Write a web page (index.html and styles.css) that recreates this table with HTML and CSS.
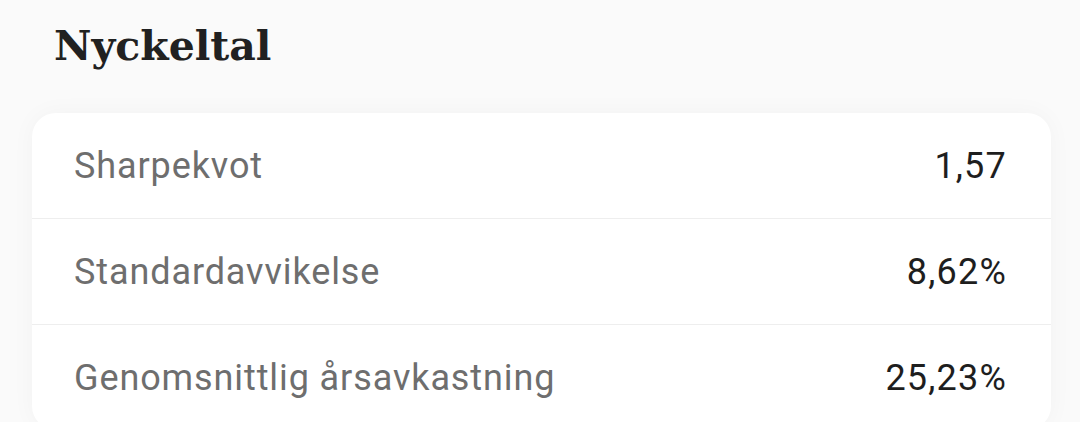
FILE: index.html
```html
<!DOCTYPE html>
<html lang="sv">
<head>
<meta charset="utf-8">
<title>Nyckeltal</title>
<link rel="stylesheet" href="styles.css">
</head>
<body>
<main class="page">
  <h2 class="title">Nyckeltal</h2>
  <section class="card">
    <div class="row"><span class="label">Sharpekvot</span><span class="value">1,57</span></div>
    <div class="row"><span class="label">Standardavvikelse</span><span class="value">8,62%</span></div>
    <div class="row"><span class="label">Genomsnittlig årsavkastning</span><span class="value">25,23%</span></div>
  </section>
</main>
</body>
</html>
```
FILE: styles.css
```css
html, body {
  margin: 0;
  padding: 0;
  background: #fafafa;
}
.page {
  padding: 0 29px 0 32px;
  font-family: Roboto, "Liberation Sans", sans-serif;
}
.title {
  margin: 0;
  padding: 22px 0 0 22px;
  height: 113px;
  box-sizing: border-box;
  font-family: "DejaVu Serif", serif;
  font-weight: bold;
  font-size: 41px;
  line-height: 48px;
  color: #212121;
}
.card {
  background: #fff;
  border-radius: 24px;
  box-shadow: 0 0 24px rgba(0,0,0,0.035);
}
.row {
  display: flex;
  justify-content: space-between;
  align-items: center;
  height: 105px;
  padding: 0 44px 0 42px;
  border-bottom: 1px solid #eeeeee;
  font-size: 36px;
  letter-spacing: 0.9px;
}
.row:last-child {
  border-bottom: none;
}
.label {
  color: #6e6e6e;
}
.value {
  color: #1e1e1e;
  font-weight: 400;
  letter-spacing: 1.2px;
}
```
